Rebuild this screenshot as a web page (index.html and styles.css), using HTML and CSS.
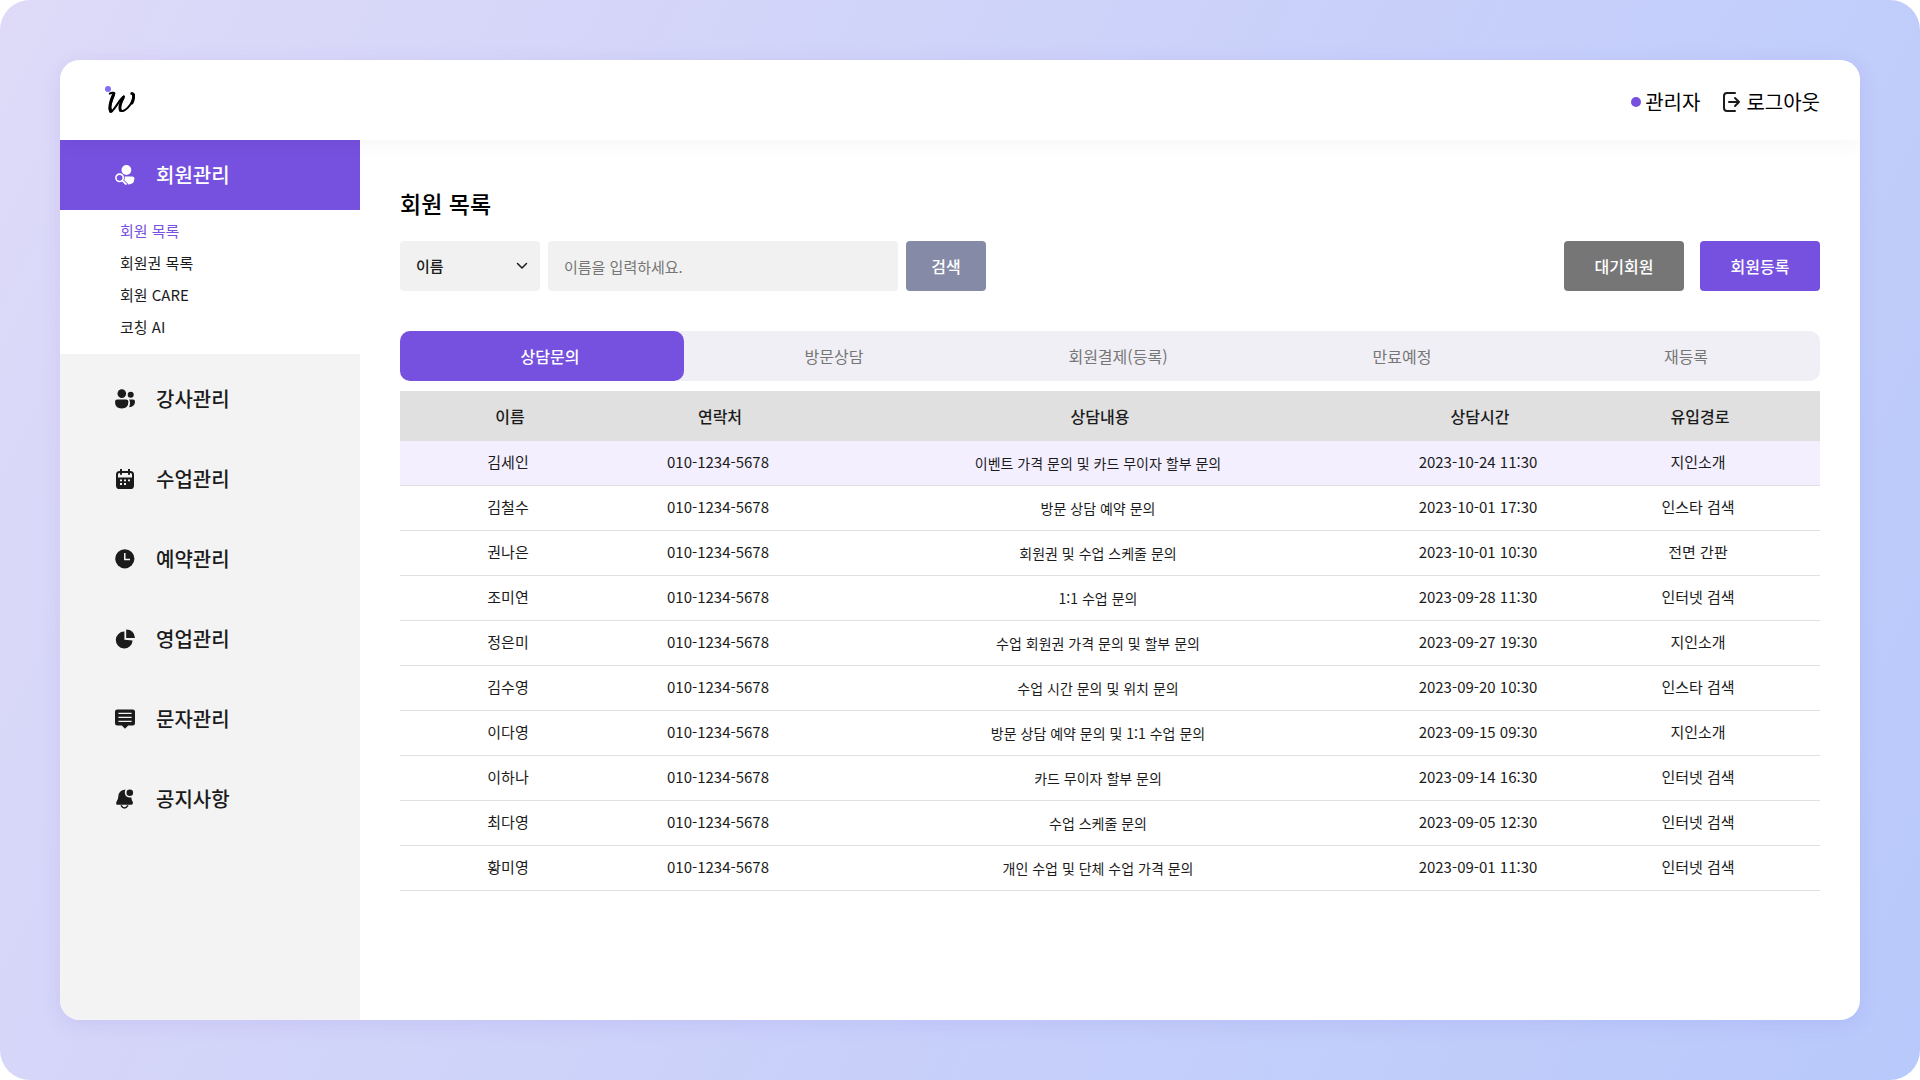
FILE: index.html
```html
<!DOCTYPE html>
<html lang="ko">
<head>
<meta charset="utf-8">
<meta name="viewport" content="width=device-width, initial-scale=1">
<title>회원 목록</title>
<link rel="stylesheet" href="styles.css">
</head>
<body>
<div class="backdrop">
<div class="app">
  <header class="topbar">
    <a class="logo" href="#" aria-label="홈">
      <svg viewBox="0 0 32 32" width="32" height="32" fill="none" stroke="#000" stroke-linecap="round" stroke-linejoin="round">
        <circle cx="5" cy="6" r="3" fill="#8070f5" stroke="none"/>
        <path stroke-width="2" d="M6.8 10.6C8.4 9.8 11 9.2 11.4 10.2C11.6 11.6 7.6 19 7.2 24"/>
        <path stroke-width="3" d="M10.4 11.5C8.4 16 6.7 20 6.9 25.6"/>
        <path stroke-width="2" d="M7.3 28.8C11 28.8 15 18 20.8 13.4"/>
        <path stroke-width="3" d="M7.2 25.5C7 27.5 7.4 28.8 8.6 28M20.4 14.2C17.6 19.5 16 24.5 17.4 27.2"/>
        <path stroke-width="2" d="M17.4 27.2C20 31.2 30.8 21 30.8 11.6"/>
        <path stroke-width="3" d="M28.8 10.6C31.4 10.6 31 15.6 29 20"/>
      </svg>
    </a>
    <div class="account">
      <span class="user"><span class="dot"></span>관리자</span>
      <a class="logout" href="#">
        <svg viewBox="0 0 20 20" width="20" height="20" fill="none" stroke="#1b1b1b" stroke-width="2" stroke-linecap="round" stroke-linejoin="round">
          <path d="M13 1H5Q2 1 2 4V16Q2 19 5 19H13M7 10H17M13 6L17 10L13 14"/>
        </svg>로그아웃</a>
    </div>
  </header>
  <div class="body">
    <nav class="sidebar">
      <a class="item active" href="#">
        <svg viewBox="0 0 20 20" width="20" height="20" fill="currentColor">
          <circle cx="11.4" cy="5" r="4.9"/>
          <path d="M9.6 11.6H17.2Q19.6 11.6 19.4 14.2Q18.8 19.4 13.2 19.4L9 15.4Q10.2 13.6 9.6 11.6Z"/>
          <circle cx="4.6" cy="12.8" r="3.7" fill="none" stroke="currentColor" stroke-width="1.6"/>
          <path d="M7.4 15.6L11 19" fill="none" stroke="currentColor" stroke-width="1.8" stroke-linecap="round"/>
          <path d="M8.8 15L12.8 19" fill="none" stroke="#7650df" stroke-width=".8"/>
        </svg>회원관리</a>
      <ul class="submenu">
        <li><a class="current" href="#">회원 목록</a></li>
        <li><a href="#">회원권 목록</a></li>
        <li><a href="#">회원 CARE</a></li>
        <li><a href="#">코칭 AI</a></li>
      </ul>
      <a class="item" href="#">
        <svg viewBox="0 0 20 20" width="20" height="20" fill="currentColor">
          <circle cx="6.8" cy="4.6" r="4.3"/><circle cx="15.7" cy="5.8" r="3"/>
          <path d="M2.4 10.4H11Q13.4 10.4 13.4 12.8Q13.4 19.4 6.7 19.4Q0 19.4 0 12.8Q0 10.4 2.4 10.4Z"/>
          <path d="M14.2 10.4H18Q20 10.4 20 12.6Q20 18 14 18.2Q16 14 14.2 10.4Z"/>
        </svg>강사관리</a>
      <a class="item" href="#">
        <svg viewBox="0 0 20 20" width="20" height="20" fill="none" stroke="currentColor">
          <rect x="2" y="3" width="16" height="16" rx="2.6" stroke-width="2"/>
          <path d="M2 8.4H18V16.5Q18 19 15.5 19H4.5Q2 19 2 16.5Z" fill="currentColor" stroke="none"/>
          <path d="M6 .6V5M14 .6V5" stroke-width="2" stroke-linecap="round"/>
          <path d="M5 11.4H7M9 11.4H11M13 11.4H15M5 15H7M9 15H11" stroke="#f3f3f3" stroke-width="1.8"/>
        </svg>수업관리</a>
      <a class="item" href="#">
        <svg viewBox="0 0 20 20" width="20" height="20" fill="currentColor">
          <circle cx="9.8" cy="9.8" r="9.6"/>
          <path d="M9.8 4V10.6H15" fill="none" stroke="#f3f3f3" stroke-width="1.5"/>
        </svg>예약관리</a>
      <a class="item" href="#">
        <svg viewBox="0 0 20 20" width="20" height="20" fill="currentColor">
          <path d="M9.4 2.6V10.8L17.6 11.4A8.4 8.4 0 1 1 9.4 2.6Z"/>
          <path d="M11.2 0.6Q19.2 .8 20 9H11.2Z"/>
        </svg>영업관리</a>
      <a class="item" href="#">
        <svg viewBox="0 0 20 20" width="20" height="20" fill="currentColor">
          <path d="M2.2 .4H17.8Q20 .4 20 2.6V14.2Q20 16.4 17.8 16.4H13.2L10 19.8L6.8 16.4H2.2Q0 16.4 0 14.2V2.6Q0 .4 2.2 .4Z"/>
          <path d="M3.4 4.4H16.6M3.4 8.4H16.6M3.4 12.4H16.6" fill="none" stroke="#f3f3f3" stroke-width="1.4"/>
        </svg>문자관리</a>
      <a class="item" href="#">
        <svg viewBox="0 0 20 20" width="20" height="20" fill="currentColor">
          <path d="M10.4 .6Q3.4 1.4 3.2 8Q3.2 10.4 1.6 12.4Q.2 15.8 3 15.8H16Q18.8 15.4 17.6 12.4Q16.4 10.6 16.4 8.4Q11 9.2 10 4.8Q9.6 2.6 10.4 .6Z"/>
          <circle cx="14.8" cy="3.8" r="3.3"/>
          <path d="M6 16.4Q9.4 21.6 13 16.4" fill="none" stroke="currentColor" stroke-width="1.6"/>
        </svg>공지사항</a>
    </nav>
    <main class="content">
      <h1>회원 목록</h1>
      <div class="toolbar">
        <form class="search" onsubmit="return false">
          <span class="select-wrap">
            <select aria-label="검색 조건"><option>이름</option><option>연락처</option></select>
            <svg viewBox="0 0 12 8" width="12" height="8" fill="none" stroke="#1b1b1b" stroke-width="1.5" stroke-linecap="round" stroke-linejoin="round"><path d="M1.5 1.5L6 6L10.5 1.5"/></svg>
          </span>
          <input type="text" aria-label="검색어" placeholder="이름을 입력하세요.">
          <button class="btn find" type="submit">검색</button>
        </form>
        <div class="actions">
          <button class="btn waiting" type="button">대기회원</button>
          <button class="btn register" type="button">회원등록</button>
        </div>
      </div>
      <div class="tabs" role="tablist">
        <button class="tab selected" type="button" role="tab" aria-selected="true">상담문의</button>
        <button class="tab" type="button" role="tab" aria-selected="false">방문상담</button>
        <button class="tab" type="button" role="tab" aria-selected="false">회원결제(등록)</button>
        <button class="tab" type="button" role="tab" aria-selected="false">만료예정</button>
        <button class="tab" type="button" role="tab" aria-selected="false">재등록</button>
      </div>
      <table>
        <colgroup><col class="c-name"><col class="c-phone"><col><col class="c-time"><col class="c-path"></colgroup>
        <thead><tr><th scope="col">이름</th><th scope="col">연락처</th><th scope="col">상담내용</th><th scope="col">상담시간</th><th scope="col">유입경로</th></tr></thead>
        <tbody>
          <tr class="highlight"><td>김세인</td><td>010-1234-5678</td><td class="memo">이벤트 가격 문의 및 카드 무이자 할부 문의</td><td>2023-10-24 11:30</td><td>지인소개</td></tr>
          <tr><td>김철수</td><td>010-1234-5678</td><td class="memo">방문 상담 예약 문의</td><td>2023-10-01 17:30</td><td>인스타 검색</td></tr>
          <tr><td>권나은</td><td>010-1234-5678</td><td class="memo">회원권 및 수업 스케줄 문의</td><td>2023-10-01 10:30</td><td>전면 간판</td></tr>
          <tr><td>조미연</td><td>010-1234-5678</td><td class="memo">1:1 수업 문의</td><td>2023-09-28 11:30</td><td>인터넷 검색</td></tr>
          <tr><td>정은미</td><td>010-1234-5678</td><td class="memo">수업 회원권 가격 문의 및 할부 문의</td><td>2023-09-27 19:30</td><td>지인소개</td></tr>
          <tr><td>김수영</td><td>010-1234-5678</td><td class="memo">수업 시간 문의 및 위치 문의</td><td>2023-09-20 10:30</td><td>인스타 검색</td></tr>
          <tr><td>이다영</td><td>010-1234-5678</td><td class="memo">방문 상담 예약 문의 및 1:1 수업 문의</td><td>2023-09-15 09:30</td><td>지인소개</td></tr>
          <tr><td>이하나</td><td>010-1234-5678</td><td class="memo">카드 무이자 할부 문의</td><td>2023-09-14 16:30</td><td>인터넷 검색</td></tr>
          <tr><td>최다영</td><td>010-1234-5678</td><td class="memo">수업 스케줄 문의</td><td>2023-09-05 12:30</td><td>인터넷 검색</td></tr>
          <tr><td>황미영</td><td>010-1234-5678</td><td class="memo">개인 수업 및 단체 수업 가격 문의</td><td>2023-09-01 11:30</td><td>인터넷 검색</td></tr>
        </tbody>
      </table>
    </main>
  </div>
</div>
</div>
</body>
</html>
```
FILE: styles.css
```css
:root {
  --purple: #7650df;
  --ink: #1b1b1b;
  --gray: #767676;
  --panel: #f3f3f3;
}
* { box-sizing: border-box; }
body {
  margin: 0;
  background: #fff;
  color: var(--ink);
  font-family: "Noto Sans CJK KR", sans-serif;
  font-size: 16px;
  line-height: 24px;
}
a { color: inherit; text-decoration: none; }
button, input, select { font: inherit; border: 0; }
.backdrop {
  display: flex;
  min-height: 100vh;
  padding: 60px;
  border-radius: 30px;
  background: linear-gradient(117deg, #dedaf8, #b8c9fb);
}
.app {
  flex: 1;
  display: flex;
  flex-direction: column;
  min-width: 0;
  overflow: hidden;
  border-radius: 20px;
  background: #fff;
  box-shadow: 0 4px 20px rgba(118, 80, 223, 0.12);
}
.topbar {
  position: relative;
  z-index: 1;
  display: flex;
  align-items: center;
  justify-content: space-between;
  height: 80px;
  padding: 0 40px 2px 43px;
  background: #fff;
  box-shadow: 0 4px 20px rgba(0, 0, 0, 0.04);
}
.logo svg, .item svg, .logout svg { display: block; }
.account { display: flex; gap: 22px; margin-top: 6px; font-size: 20px; line-height: 30px; color: #000; }
.user, .logout { display: flex; align-items: center; gap: 4px; }
.dot { width: 10px; height: 10px; border-radius: 50%; background: var(--purple); }
.body { flex: 1; display: flex; }
.sidebar {
  flex: none;
  display: flex;
  flex-direction: column;
  gap: 10px;
  width: 300px;
  background: var(--panel);
}
.item {
  display: flex;
  align-items: center;
  gap: 21px;
  height: 70px;
  padding-left: 55px;
  font-size: 20px;
  font-weight: 500;
}
.item.active { background: var(--purple); color: #fff; margin-bottom: -10px; }
.submenu {
  margin: 0;
  padding: 5px 0 11px 60px;
  list-style: none;
  background: #fff;
  font-size: 15px;
  line-height: 32px;
}
.submenu .current { color: var(--purple); }
.content { flex: 1; min-width: 0; padding: 44px 40px; }
h1 { margin: 0 0 19px; font-size: 23px; line-height: 38px; font-weight: 500; color: #000; }
.toolbar { display: flex; justify-content: space-between; margin-bottom: 40px; }
.search { display: flex; gap: 8px; }
.select-wrap { position: relative; width: 140px; height: 50px; }
.select-wrap svg { position: absolute; right: 12px; top: 21px; pointer-events: none; }
select, input {
  height: 50px;
  padding: 0 16px;
  border-radius: 4px;
  background: #f1f1f1;
  color: var(--ink);
  font-size: 15px;
}
select { width: 100%; appearance: none; font-weight: 500; }
input { width: 350px; }
input::placeholder { color: var(--gray); opacity: 1; }
.actions { display: flex; gap: 16px; }
.btn { height: 50px; padding: 0; border-radius: 4px; color: #fff; font-weight: 500; }
.find { width: 80px; background: #858aa6; }
.waiting { width: 120px; background: var(--gray); }
.register { width: 120px; background: var(--purple); }
.tabs {
  display: grid;
  grid-template-columns: repeat(5, 1fr);
  margin-bottom: 10px;
  border-radius: 10px;
  background: #f0eff5;
}
.tab { height: 50px; padding: 0 0 0 16px; border-radius: 10px; background: none; color: var(--gray); }
.tab.selected { background: var(--purple); color: #fff; font-weight: 500; }
table { width: 100%; table-layout: fixed; border-collapse: separate; border-spacing: 0; text-align: center; }
.c-name { width: 220px; }
.c-phone, .c-time { width: 200px; }
.c-path { width: 240px; }
th { height: 50px; padding: 0; background: #e0e0e0; font-weight: 500; }
td { height: 45px; padding: 0 4px 2px 0; border-bottom: 1px solid #e0e0e0; font-size: 15px; }
.memo { padding-bottom: 0; font-size: 14px; }
.highlight { background: #f3effe; }
```
